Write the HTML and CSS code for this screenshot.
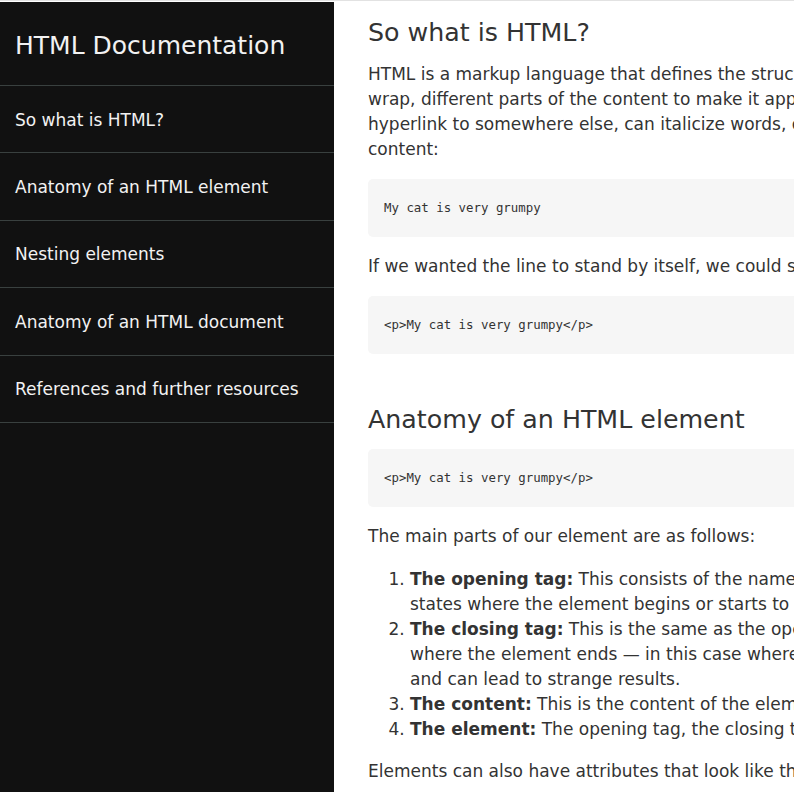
FILE: index.html
```html
<!DOCTYPE html>
<html lang="en">
<head>
<meta charset="utf-8">
<title>HTML Documentation</title>
<link rel="stylesheet" href="styles.css">
</head>
<body>
<div class="page">
  <nav class="navbar" id="navbar">
    <header class="nav-title">HTML Documentation</header>
    <a class="nav-link" href="#So_what_is_HTML">So what is HTML?</a>
    <a class="nav-link" href="#Anatomy_of_an_HTML_element">Anatomy of an HTML element</a>
    <a class="nav-link" href="#Nesting_elements">Nesting elements</a>
    <a class="nav-link" href="#Anatomy_of_an_HTML_document">Anatomy of an HTML document</a>
    <a class="nav-link" href="#References_and_further_resources">References and further resources</a>
  </nav>
  <main class="main" id="main-doc">
    <section class="main-section" id="So_what_is_HTML">
      <header class="section-title">So what is HTML?</header>
      <p>HTML is a markup language that defines the structure of your content. HTML consists of a series of elements, which you use to enclose, or wrap, different parts of the content to make it appear a certain way, or act a certain way. The enclosing tags can make a word or image hyperlink to somewhere else, can italicize words, can make the font bigger or smaller, and so on. For example, take the following line of content:</p>
      <pre class="code"><code>My cat is very grumpy</code></pre>
      <p>If we wanted the line to stand by itself, we could specify that it is a paragraph by enclosing it in paragraph tags:</p>
      <pre class="code"><code>&lt;p&gt;My cat is very grumpy&lt;/p&gt;</code></pre>
    </section>
    <section class="main-section" id="Anatomy_of_an_HTML_element">
      <header class="section-title">Anatomy of an HTML element</header>
      <pre class="code"><code>&lt;p&gt;My cat is very grumpy&lt;/p&gt;</code></pre>
      <p>The main parts of our element are as follows:</p>
      <ol class="parts">
        <li><strong>The opening tag:</strong> This consists of the name of the element (in this case, p), wrapped in opening and closing angle brackets. This states where the element begins or starts to take effect — in this case where the paragraph begins.</li>
        <li><strong>The closing tag:</strong> This is the same as the opening tag, except that it includes a forward slash before the element name. This states where the element ends — in this case where the paragraph ends. Failing to include a closing tag is one of the common beginner errors and can lead to strange results.</li>
        <li><strong>The content:</strong> This is the content of the element, which in this case, is just text.</li>
        <li><strong>The element:</strong> The opening tag, the closing tag, and the content together comprise the element.</li>
      </ol>
      <p>Elements can also have attributes that look like the following:</p>
    </section>
  </main>
</div>
</body>
</html>
```
FILE: styles.css
```css
html, body {
  margin: 0;
  padding: 0;
  background: #ffffff;
}

body {
  font-family: "DejaVu Sans", Verdana, sans-serif;
  color: #333333;
  overflow: hidden;
  height: 794px;
}

.page {
  display: flex;
  align-items: flex-start;
  border-top: 1px solid #e2e2e2;
  padding-top: 1px;
  width: 1700px;
}

.navbar {
  flex: 0 0 334px;
  height: 790px;
  background: #111111;
  display: flex;
  flex-direction: column;
}

.nav-title {
  color: #f2f2f2;
  font-size: 25px;
  padding: 28px 15px 24px;
  line-height: 31px;
  border-bottom: 1px solid #39403f;
}

.nav-link {
  color: #f2f2f2;
  text-decoration: none;
  font-size: 17px;
  line-height: 20px;
  padding: 23.5px 15px 22.9px;
  border-bottom: 1px solid #39403f;
}

.main {
  flex: 0 0 auto;
  width: 1220px;
  padding: 0 34px;
  font-size: 17px;
  line-height: 25px;
}

.section-title {
  font-size: 25.3px;
  line-height: 34px;
  margin: 14px 0 12px;
}

.main p {
  margin: 0 0 17px;
}

.code {
  background: #f6f6f6;
  border-radius: 5px;
  margin: 0 0 17px;
  padding: 21px 16px;
  font-family: "DejaVu Sans Mono", "Liberation Mono", monospace;
  font-size: 12.4px;
  line-height: 16px;
  color: #333333;
}

.main-section + .main-section {
  margin-top: 49px;
}

.parts {
  margin: 18px 0 17px;
  padding: 0 18px 0 42px;
}

.parts strong {
  font-weight: bold;
}
```
